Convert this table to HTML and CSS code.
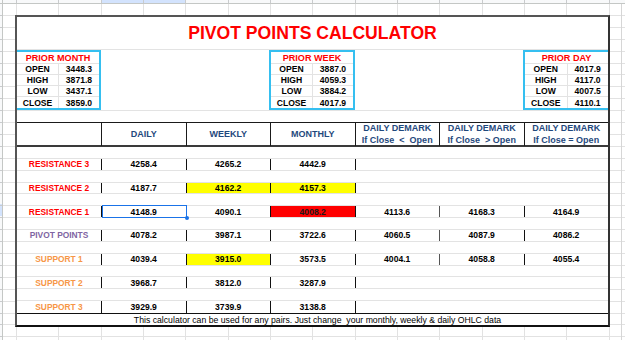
FILE: index.html
```html
<!DOCTYPE html>
<html>
<head>
<meta charset="utf-8">
<title>Pivot Points Calculator</title>
<link rel="stylesheet" href="styles.css">
</head>
<body>
<div class="app">
  <div class="corner"></div>
  <div class="colhead"></div>
  <div class="rowhead"></div>
  <div class="sheet">
    <div class="calc">
      <div class="title">PIVOT POINTS CALCULATOR</div>
      <div class="info">
        <div class="prior prior-month">
          <div class="prior-title">PRIOR MONTH</div>
          <div class="k">OPEN</div><div class="v">3448.3</div>
          <div class="k">HIGH</div><div class="v">3871.8</div>
          <div class="k">LOW</div><div class="v">3437.1</div>
          <div class="k last">CLOSE</div><div class="v last">3859.0</div>
        </div>
        <div class="prior prior-week">
          <div class="prior-title">PRIOR WEEK</div>
          <div class="k">OPEN</div><div class="v">3887.0</div>
          <div class="k">HIGH</div><div class="v">4059.3</div>
          <div class="k">LOW</div><div class="v">3884.2</div>
          <div class="k last">CLOSE</div><div class="v last">4017.9</div>
        </div>
        <div class="prior prior-day">
          <div class="prior-title">PRIOR DAY</div>
          <div class="k">OPEN</div><div class="v">4017.9</div>
          <div class="k">HIGH</div><div class="v">4117.0</div>
          <div class="k">LOW</div><div class="v">4007.5</div>
          <div class="k last">CLOSE</div><div class="v last">4110.1</div>
        </div>
      </div>
      <div class="spacer"></div>
      <div class="thead">
        <div class="th"></div>
        <div class="th">DAILY</div>
        <div class="th">WEEKLY</div>
        <div class="th">MONTHLY</div>
        <div class="th">DAILY DEMARK
If Close  &lt;  Open</div>
        <div class="th">DAILY DEMARK
If Close  &gt; Open</div>
        <div class="th">DAILY DEMARK
If Close = Open</div>
      </div>
      <div class="tbody">
        <div class="gap"></div>
        <div class="row">
          <div class="lbl res">RESISTANCE 3</div>
          <div class="c b">4258.4</div>
          <div class="c b">4265.2</div>
          <div class="c b">4442.9</div>
          <div class="c b"></div>
          <div class="c"></div>
          <div class="c"></div>
        </div>
        <div class="gap"></div>
        <div class="row">
          <div class="lbl res">RESISTANCE 2</div>
          <div class="c b">4187.7</div>
          <div class="c b yellow">4162.2</div>
          <div class="c b yellow">4157.3</div>
          <div class="c b"></div>
          <div class="c"></div>
          <div class="c"></div>
        </div>
        <div class="gap"></div>
        <div class="row">
          <div class="lbl res">RESISTANCE 1</div>
          <div class="c b sel">4148.9</div>
          <div class="c b">4090.1</div>
          <div class="c b red">4008.2</div>
          <div class="c b">4113.6</div>
          <div class="c g">4168.3</div>
          <div class="c b">4164.9</div>
        </div>
        <div class="gap"></div>
        <div class="row">
          <div class="lbl piv">PIVOT POINTS</div>
          <div class="c b">4078.2</div>
          <div class="c b">3987.1</div>
          <div class="c b">3722.6</div>
          <div class="c b">4060.5</div>
          <div class="c g">4087.9</div>
          <div class="c b">4086.2</div>
        </div>
        <div class="gap"></div>
        <div class="row">
          <div class="lbl sup">SUPPORT 1</div>
          <div class="c b">4039.4</div>
          <div class="c b yellow">3915.0</div>
          <div class="c b">3573.5</div>
          <div class="c b">4004.1</div>
          <div class="c g">4058.8</div>
          <div class="c b">4055.4</div>
        </div>
        <div class="gap"></div>
        <div class="row">
          <div class="lbl sup">SUPPORT 2</div>
          <div class="c b">3968.7</div>
          <div class="c b">3812.0</div>
          <div class="c b">3287.9</div>
          <div class="c b"></div>
          <div class="c"></div>
          <div class="c"></div>
        </div>
        <div class="gap"></div>
        <div class="row">
          <div class="lbl sup">SUPPORT 3</div>
          <div class="c b">3929.9</div>
          <div class="c b">3739.9</div>
          <div class="c b">3138.8</div>
          <div class="c b"></div>
          <div class="c"></div>
          <div class="c"></div>
        </div>
      </div>
      <div class="foot">This calculator can be used for any pairs. Just change  your monthly, weekly &amp; daily OHLC data</div>
    </div>
  </div>
</div>
</body>
</html>
```
FILE: styles.css
```css
* {
  box-sizing: border-box;
  margin: 0;
  padding: 0;
}

body {
  margin: 0;
  width: 625px;
  height: 340px;
  overflow: hidden;
  background: #fff;
  font-family: "Liberation Sans", Arial, sans-serif;
  color: #000;
}

.app {
  display: grid;
  grid-template-columns: 3px 1fr;
  grid-template-rows: 4px 1fr;
  height: 340px;
}

.corner {
  background: #f8f9fa;
  border-right: 1px solid #c4c7c5;
  border-bottom: 1px solid #c4c7c5;
}

.colhead {
  background:
    repeating-linear-gradient(to right, transparent 0 13px, #c9cbcd 13px 14px, transparent 14px 42.333px),
    linear-gradient(#d3e3fd, #d3e3fd) 98px 0 / 84px 100% no-repeat,
    #f8f9fa;
  border-bottom: 1px solid #c4c7c5;
}

.rowhead {
  background:
    repeating-linear-gradient(to bottom, transparent 0 10.905px, #c9cbcd 10.905px 11.905px),
    linear-gradient(#d3e3fd, #d3e3fd) 0 200px / 100% 12px no-repeat,
    #f8f9fa;
  border-right: 1px solid #c4c7c5;
}

.sheet {
  padding: 11px 0 0 12px;
  background:
    linear-gradient(to right, transparent 618px, #d6d6d6 618px 619px, transparent 619px),
    repeating-linear-gradient(to right, transparent 0 13px, #e2e2e2 13px 14px, transparent 14px 42.333px),
    repeating-linear-gradient(to bottom, transparent 0 10.905px, #e2e2e2 10.905px 11.905px),
    #fff;
}

.calc {
  width: 595px;
  height: 312px;
  border: 2px solid #555;
  border-bottom-color: #111;
  border-right-color: #333;
  background: #fff;
  display: flex;
  flex-direction: column;
}

.title {
  height: 33px;
  border-bottom: 1px solid #e3e3e3;
  display: flex;
  align-items: center;
  justify-content: center;
  color: #ff0000;
  font-weight: bold;
  font-size: 17.6px;
}

.info {
  height: 61px;
  border-bottom: 1px solid #e3e3e3;
  display: flex;
  justify-content: space-between;
  align-items: flex-start;
}

.prior {
  height: 60px;
  border: 2px solid #35bff0;
  display: grid;
  grid-template-columns: 1fr 1fr;
  grid-template-rows: 12px repeat(4, 1fr);
  font-size: 8.6px;
  font-weight: bold;
}

.prior-month {
  width: 84px;
  border-left: none;
}

.prior-week {
  width: 86px;
}

.prior-day {
  width: 85px;
  border-right: none;
}

.prior-title {
  grid-column: 1 / 3;
  color: #ff0000;
  font-size: 9.1px;
  border-bottom: 1px solid #e3e3e3;
  display: flex;
  align-items: center;
  justify-content: center;
}

.k,
.v {
  border-bottom: 1px solid #e3e3e3;
  display: flex;
  align-items: center;
  justify-content: center;
}

.v {
  border-left: 1px solid #e3e3e3;
}

.k.last,
.v.last {
  border-bottom: none;
}

.spacer {
  height: 11px;
}

.thead {
  height: 25px;
  border-top: 1px solid #1a1a1a;
  border-bottom: 2px solid #3a3a3a;
  display: grid;
  grid-template-columns: 84px repeat(6, 1fr);
  color: #1f497d;
  font-weight: bold;
  font-size: 9px;
}

.th {
  display: flex;
  align-items: center;
  justify-content: center;
  text-align: center;
  line-height: 11.5px;
  white-space: pre;
}

.th + .th {
  border-left: 1px solid #1a1a1a;
}

.tbody {
  height: 166px;
  display: grid;
  grid-template-rows: repeat(14, 1fr);
}

.gap,
.row {
  border-bottom: 1px solid #e3e3e3;
}

.tbody > :last-child {
  border-bottom: none;
}

.row {
  display: grid;
  grid-template-columns: 84px repeat(6, 1fr);
  font-weight: bold;
  font-size: 8.6px;
}

.row > div {
  display: flex;
  align-items: center;
  justify-content: center;
}

.row > .lbl {
  font-size: 8.4px;
}

.c.b {
  border-left: 1px solid #111;
}

.c.g {
  border-left: 1px solid #555;
}

.lbl.res {
  color: #ff0000;
}

.lbl.piv {
  color: #8064a2;
}

.lbl.sup {
  color: #f79646;
}

.yellow {
  background: #ffff00;
}

.red {
  background: #ff0000;
  color: #1a1a1a;
}

.sel {
  position: relative;
}

.sel::after {
  content: "";
  position: absolute;
  top: -1px;
  right: -1px;
  bottom: -1px;
  left: 0;
  border: 1px solid #1a73e8;
}

.sel::before {
  content: "";
  position: absolute;
  right: -3px;
  bottom: -3px;
  width: 4px;
  height: 4px;
  border-radius: 50%;
  background: #1a73e8;
  z-index: 1;
}

.foot {
  height: 12px;
  border-top: 1px solid #111;
  font-size: 8.7px;
  white-space: pre;
  display: flex;
  align-items: center;
  justify-content: center;
  padding-left: 10px;
}
```
